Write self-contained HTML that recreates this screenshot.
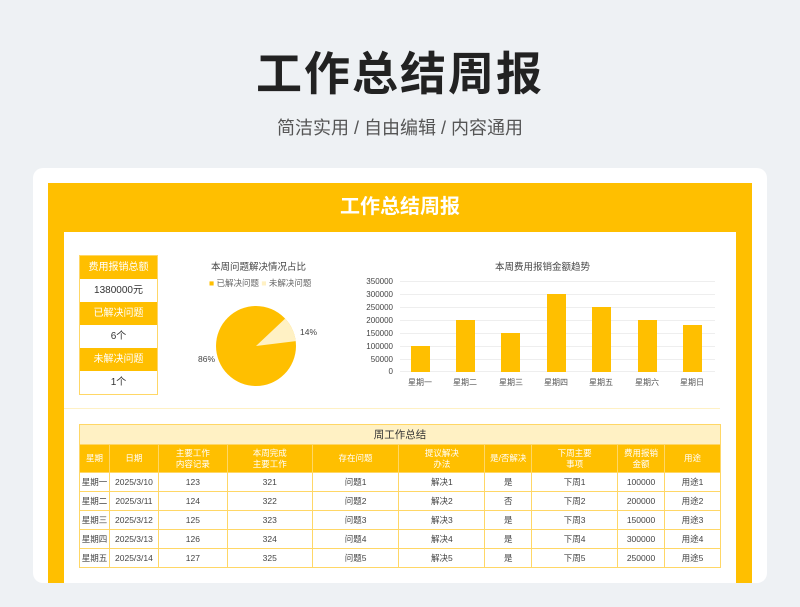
<!DOCTYPE html>
<html><head><meta charset="utf-8"><style>
*{margin:0;padding:0;box-sizing:border-box}
body{width:800px;height:607px;overflow:hidden;background:#eef1f4;font-family:"Liberation Sans","Noto Sans CJK SC",sans-serif;position:relative}
.t1{position:absolute;top:38px;width:800px;text-align:center;font-size:46px;font-weight:bold;color:#222;letter-spacing:2px}
.t2{position:absolute;top:114px;width:800px;text-align:center;font-size:18px;color:#555}
.card{position:absolute;left:33px;top:168px;width:734px;height:415px;background:#fff;border-radius:10px;overflow:hidden}
.frame{position:absolute;left:15px;top:15px;width:704px;height:400px;background:#ffbf00}
.ftitle{position:absolute;left:0;top:0;width:704px;height:49px;line-height:49px;text-align:center;color:#fff;font-size:20px;font-weight:bold}
.inner{position:absolute;left:16px;top:49px;width:672px;height:360px;background:#fff}
.kpi{position:absolute;left:15px;top:23px;width:79px;border:1px solid #ffd766}
.kpi div{height:23px;line-height:23px;text-align:center;font-size:10px}
.kpi .h{background:#ffbf00;color:#fff}
.kpi .v{background:#fff;color:#333}
.ct{position:absolute;font-size:9.5px;color:#444}
table{position:absolute;left:15px;top:192px;width:642px;border-collapse:collapse;font-size:8.5px;color:#444}
td{border:1px solid #ffd766;text-align:center;height:19px;padding:0}
tr.tt td{background:#fff1c4;height:20px;font-size:10.5px;color:#333}
tr.hd td{background:#ffbf00;color:#fff;height:28px;line-height:11px}
</style></head><body>
<div class="t1">工作总结周报</div>
<div class="t2">简洁实用 / 自由编辑 / 内容通用</div>
<div class="card"><div class="frame">
<div class="ftitle">工作总结周报</div>
<div class="inner">
<div class="kpi">
<div class="h">费用报销总额</div><div class="v">1380000元</div>
<div class="h">已解决问题</div><div class="v">6个</div>
<div class="h">未解决问题</div><div class="v">1个</div>
</div>
<div class="ct" style="left:147px;top:27px">本周问题解决情况占比</div>
<div class="ct" style="left:145px;top:45px;font-size:8.5px;color:#666"><span style="color:#ffbf00">■</span> 已解决问题 <span style="color:#fff1c4">■</span> 未解决问题</div>
<svg style="position:absolute;left:0;top:0" width="672" height="180">
<circle cx="192" cy="114" r="40" fill="#ffbf00"/>
<path d="M192 114 L221.1 86.6 A40 40 0 0 1 231.7 109.1 Z" fill="#fff1c4"/>
<text x="236" y="103" font-size="8.5" fill="#444" font-family="Liberation Sans">14%</text>
<text x="134" y="130" font-size="8.5" fill="#444" font-family="Liberation Sans">86%</text>
<g stroke="#eee" stroke-width="1">
<line x1="336" y1="49.5" x2="651" y2="49.5"/><line x1="336" y1="62.5" x2="651" y2="62.5"/><line x1="336" y1="75.5" x2="651" y2="75.5"/><line x1="336" y1="88.5" x2="651" y2="88.5"/><line x1="336" y1="101.5" x2="651" y2="101.5"/><line x1="336" y1="114.5" x2="651" y2="114.5"/><line x1="336" y1="127.5" x2="651" y2="127.5"/><line x1="336" y1="139.5" x2="651" y2="139.5"/>
</g>
<g font-size="8" fill="#444" text-anchor="end" font-family="Liberation Sans">
<text x="329" y="52">350000</text><text x="329" y="65">300000</text><text x="329" y="78">250000</text><text x="329" y="91">200000</text><text x="329" y="104">150000</text><text x="329" y="117">100000</text><text x="329" y="130">50000</text><text x="329" y="142">0</text>
</g>
<g fill="#ffbf00">
<rect x="347" y="114" width="19" height="26"/><rect x="392" y="88" width="19" height="52"/><rect x="437" y="101" width="19" height="39"/><rect x="483" y="62" width="19" height="78"/><rect x="528" y="75" width="19" height="65"/><rect x="574" y="88" width="19" height="52"/><rect x="619" y="93" width="19" height="47"/>
</g>
<g font-size="8" fill="#555" text-anchor="middle">
<text x="356" y="153">星期一</text><text x="401" y="153">星期二</text><text x="447" y="153">星期三</text><text x="492" y="153">星期四</text><text x="537" y="153">星期五</text><text x="583" y="153">星期六</text><text x="628" y="153">星期日</text>
</g>
<line x1="0" y1="176.5" x2="656" y2="176.5" stroke="#fff1c4"/>
</svg>
<div class="ct" style="left:431px;top:27px">本周费用报销金额趋势</div>
<table>
<colgroup><col style="width:30px"><col style="width:49px"><col style="width:69px"><col style="width:85px"><col style="width:87px"><col style="width:86px"><col style="width:47px"><col style="width:86px"><col style="width:47px"><col style="width:56px"></colgroup>
<tr class="tt"><td colspan="10">周工作总结</td></tr>
<tr class="hd"><td>星期</td><td>日期</td><td>主要工作<br>内容记录</td><td>本周完成<br>主要工作</td><td>存在问题</td><td>提议解决<br>办法</td><td>是/否解决</td><td>下周主要<br>事项</td><td>费用报销<br>金额</td><td>用途</td></tr>
<tr><td>星期一</td><td>2025/3/10</td><td>123</td><td>321</td><td>问题1</td><td>解决1</td><td>是</td><td>下周1</td><td>100000</td><td>用途1</td></tr>
<tr><td>星期二</td><td>2025/3/11</td><td>124</td><td>322</td><td>问题2</td><td>解决2</td><td>否</td><td>下周2</td><td>200000</td><td>用途2</td></tr>
<tr><td>星期三</td><td>2025/3/12</td><td>125</td><td>323</td><td>问题3</td><td>解决3</td><td>是</td><td>下周3</td><td>150000</td><td>用途3</td></tr>
<tr><td>星期四</td><td>2025/3/13</td><td>126</td><td>324</td><td>问题4</td><td>解决4</td><td>是</td><td>下周4</td><td>300000</td><td>用途4</td></tr>
<tr><td>星期五</td><td>2025/3/14</td><td>127</td><td>325</td><td>问题5</td><td>解决5</td><td>是</td><td>下周5</td><td>250000</td><td>用途5</td></tr>
</table>
</div></div></div>
</body></html>
